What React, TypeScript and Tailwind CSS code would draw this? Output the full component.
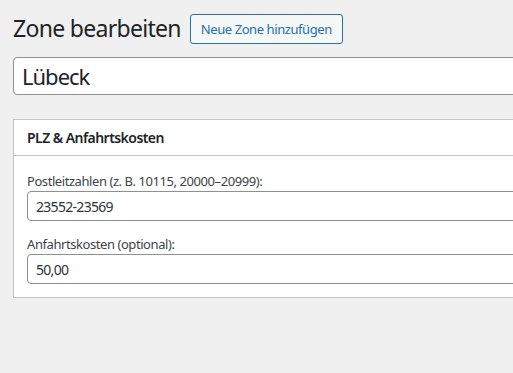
export default function App() {
  const font = { fontFamily: '"Noto Sans", "Open Sans", sans-serif' };
  return (
    <div className="w-[513px] h-[373px] overflow-hidden bg-[#f0f0f1] text-[#3c434a]" style={font}>
      <div className="w-[620px] pl-[13px] pt-[13px]">
        <div className="flex items-start h-[44px]">
          <h1 className="text-[23px] leading-[30px] font-normal text-[#1d2327] m-0 tracking-[-0.7px]">Zone bearbeiten</h1>
          <button className="ml-[9px] mt-[1px] h-[30px] px-[10px] border border-[#2271b1] rounded-[3px] bg-[#f6f7f7] text-[13px] text-[#2271b1] leading-[28px] tracking-[-0.42px]">
            Neue Zone hinzufügen
          </button>
        </div>
        <div className="h-[38px] border border-[#8c8f94] rounded-[4px] bg-white flex items-center px-[8px] text-[22px] text-[#1d2327] tracking-[-1px]">
          Lübeck
        </div>
        <div className="mt-[24px] border border-[#c3c4c7] bg-white">
          <div className="h-[36px] border-b border-[#c3c4c7] px-[13px] flex items-center text-[14px] font-semibold text-[#1d2327] tracking-[-0.55px]">
            PLZ &amp; Anfahrtskosten
          </div>
          <div className="px-[13px] pt-[16px] pb-[13px]">
            <div className="text-[13px] leading-[18px] tracking-[-0.43px]">Postleitzahlen (z. B. 10115, 20000–20999):</div>
            <div className="mt-[1px] h-[30px] border border-[#8c8f94] rounded-[4px] bg-white flex items-center px-[8px] text-[14px] text-[#2c3338] tracking-[-0.7px]">
              23552-23569
            </div>
            <div className="mt-[14px] text-[13px] leading-[18px] tracking-[-0.43px]">Anfahrtskosten (optional):</div>
            <div className="mt-[1px] h-[30px] border border-[#8c8f94] rounded-[4px] bg-white flex items-center px-[8px] text-[14px] text-[#2c3338] tracking-[-0.7px]">
              50,00
            </div>
          </div>
        </div>
      </div>
    </div>
  );
}
